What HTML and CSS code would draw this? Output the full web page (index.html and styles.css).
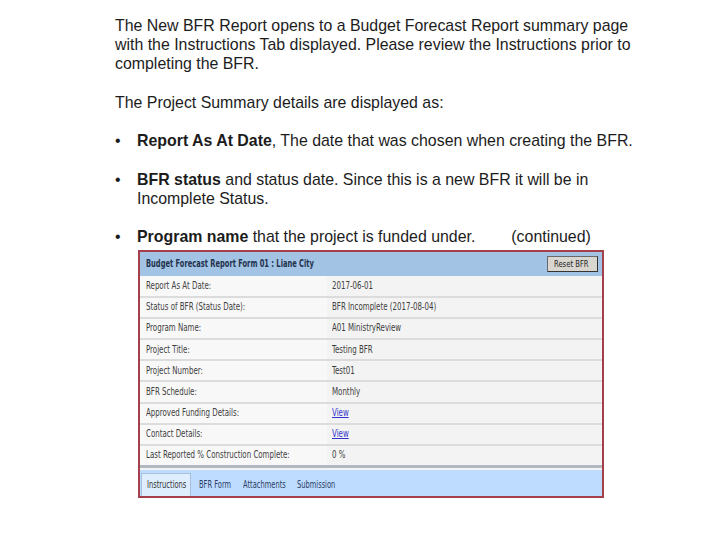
FILE: index.html
```html
<!DOCTYPE html>
<html>
<head>
<meta charset="utf-8">
<link rel="stylesheet" href="styles.css">
</head>
<body>
<div class="page">
  <p class="para">The New BFR Report opens to a Budget Forecast Report summary page with the Instructions Tab displayed. Please review the Instructions prior to completing the BFR.</p>
  <p class="para">The Project Summary details are displayed as:</p>
  <ul class="bullets">
    <li><span class="dot">•</span><span class="btext"><b>Report As At Date</b>, The date that was chosen when creating the BFR.</span></li>
    <li><span class="dot">•</span><span class="btext"><b>BFR status</b> <span>and status date. Since this is a new BFR it will be in</span> <span>Incomplete Status.</span></span></li>
    <li><span class="dot">•</span><span class="btext"><b>Program name</b> that the project is funded under.<span class="cont">(continued)</span></span></li>
  </ul>
  <div class="shot">
    <div class="head">
      <span class="title"><span class="sx">Budget Forecast Report Form 01 : Liane City</span></span>
      <span class="btn"><span class="sx">Reset BFR</span></span>
    </div>
    <div class="rows">
      <div class="row"><span class="lbl"><span class="sx">Report As At Date:</span></span><span class="val"><span class="sx">2017-06-01</span></span></div>
      <div class="row"><span class="lbl"><span class="sx">Status of BFR (Status Date):</span></span><span class="val"><span class="sx">BFR Incomplete (2017-08-04)</span></span></div>
      <div class="row"><span class="lbl"><span class="sx">Program Name:</span></span><span class="val"><span class="sx">A01 MinistryReview</span></span></div>
      <div class="row"><span class="lbl"><span class="sx">Project Title:</span></span><span class="val"><span class="sx">Testing BFR</span></span></div>
      <div class="row"><span class="lbl"><span class="sx">Project Number:</span></span><span class="val"><span class="sx">Test01</span></span></div>
      <div class="row"><span class="lbl"><span class="sx">BFR Schedule:</span></span><span class="val"><span class="sx">Monthly</span></span></div>
      <div class="row"><span class="lbl"><span class="sx">Approved Funding Details:</span></span><span class="val"><a class="link sx">View</a></span></div>
      <div class="row"><span class="lbl"><span class="sx">Contact Details:</span></span><span class="val"><a class="link sx">View</a></span></div>
      <div class="row"><span class="lbl"><span class="sx">Last Reported % Construction Complete:</span></span><span class="val"><span class="sx">0 %</span></span></div>
    </div>
    <div class="tabs">
      <span class="tab active t1"><span class="sx">Instructions</span></span>
      <span class="tab t2"><span class="sx">BFR Form</span></span>
      <span class="tab t3"><span class="sx">Attachments</span></span>
      <span class="tab t4"><span class="sx">Submission</span></span>
    </div>
  </div>
</div>
</body>
</html>
```
FILE: styles.css
```css
html, body { margin: 0; padding: 0; background: #fff; }
.page {
  padding: 16px 0 0 115px;
  font-family: "Liberation Sans", Arial, sans-serif;
  font-size: 15.9px;
  line-height: 19.2px;
  color: #1c1c1c;
}
.para { margin: 0 0 19.2px 0; width: 525px; }
.bullets { list-style: none; margin: 0; padding: 0; width: 534px; }
.bullets li { display: flex; margin-bottom: 19.2px; }
.bullets li:last-child { margin-bottom: 0; }
.dot { width: 22px; flex: none; }
.btext { flex: 1; }
.cont { margin-left: 36px; }
.shot {
  margin: 4px 0 0 23px;
  width: 462px;
  border: 2px solid #a3404c;
  background: #f3f3f3;
  font-family: "DejaVu Sans Condensed", "DejaVu Sans", sans-serif;
  font-size: 9.8px;
  line-height: 12px;
  color: #404040;
}
.sx {
  display: inline-block;
  white-space: nowrap;
  transform: scaleX(0.8);
  transform-origin: 0 50%;
}
.head {
  display: flex; align-items: center; justify-content: space-between;
  height: 24px; background: #a2c3e3; padding: 0 4px 0 6px;
}
.title { font-weight: bold; color: #23324e; }
.title .sx { transform: scaleX(0.76); }
.btn {
  width: 43px; height: 14px; padding-left: 6px; background: #d9d6cf;
  border: 1px solid #6a6a6a; border-right-color: #333; border-bottom-color: #333;
  font-size: 9.5px; color: #222; display: flex; align-items: center;
}
.rows { display: flex; flex-direction: column; }
.row {
  display: flex; height: 19.2px; align-items: center;
  border-bottom: 2px solid #dcdcdc;
}
.row:last-child { border-bottom: 3px solid #b2b8bf; }
.lbl { width: 181px; padding-left: 6px; background: #f8f8f8; height: 100%; display: flex; align-items: center; }
.val { flex: 1; padding-left: 5px; height: 100%; display: flex; align-items: center; }
.link { color: #3333cc; text-decoration: underline; }
.tabs {
  display: flex; align-items: flex-end; height: 26px; background: #bedcff;
  padding-left: 1px; margin-top: 2px;
}
.tab { height: 23px; display: flex; align-items: center; color: #2b3c66; padding-left: 5px; box-sizing: border-box; }
.tabs .sx { transform: scaleX(0.76); }
.t1 { width: 50px; }
.t2 { width: 44px; margin-left: 3px; }
.t3 { width: 54px; }
.t4 { width: 60px; }
.tab.active { background: #dfeeff; border: 1px solid #a9bedb; border-bottom: none; color: #333; }
```
